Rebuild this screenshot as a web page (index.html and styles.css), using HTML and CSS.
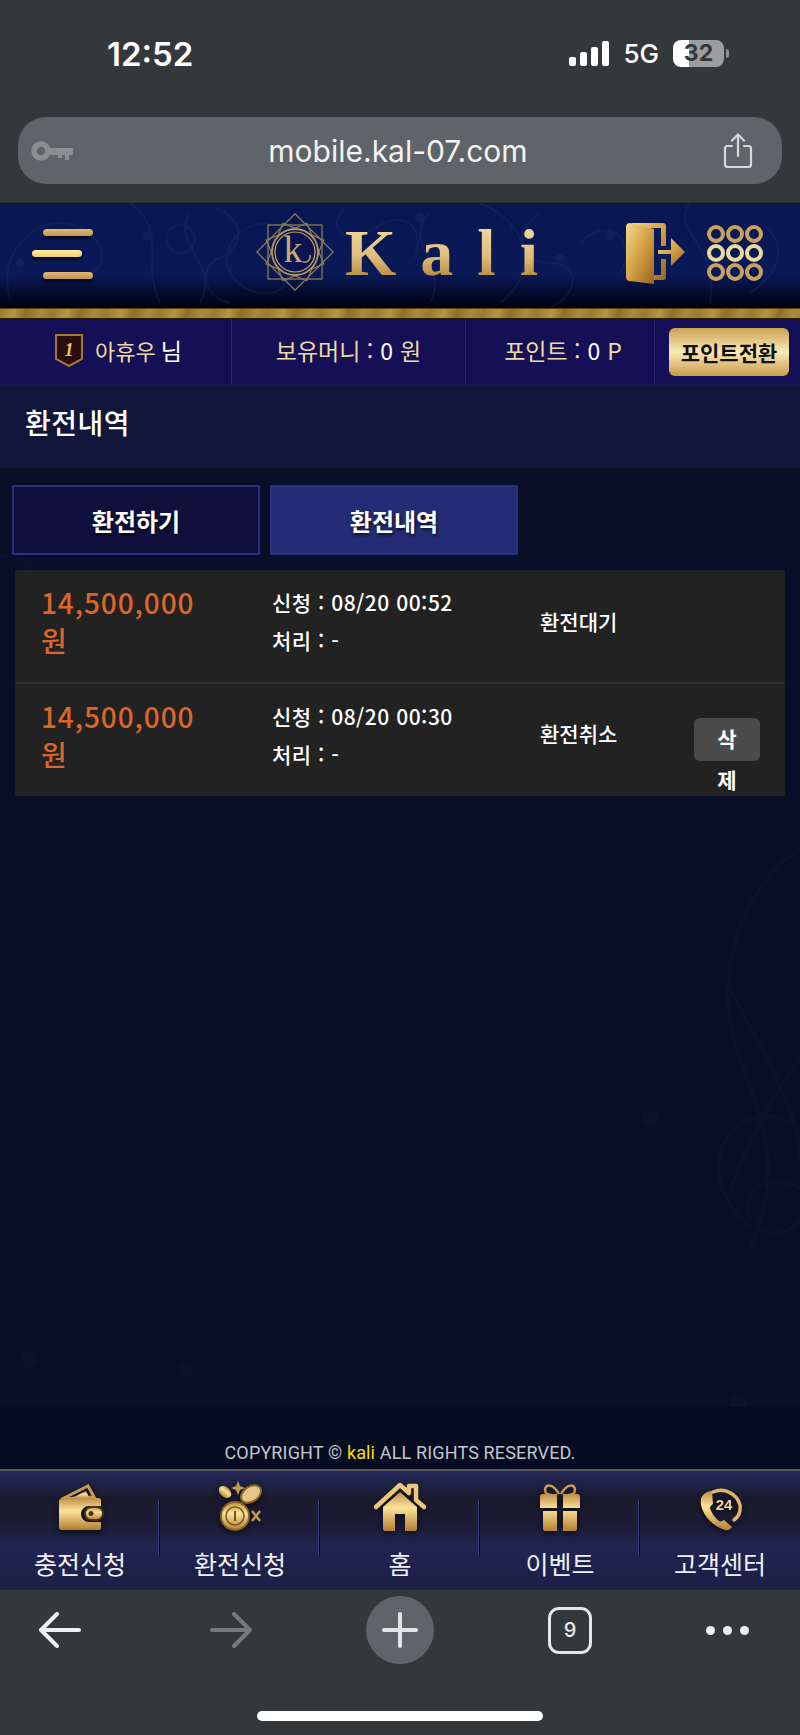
FILE: index.html
```html
<!DOCTYPE html>
<html lang="ko">
<head>
<meta charset="utf-8">
<title>환전내역</title>
<link rel="stylesheet" href="styles.css">
</head>
<body>
<svg class="defs" width="0" height="0" aria-hidden="true">
  <defs>
    <linearGradient id="doorgold" x1="0" y1="0" x2="1" y2="1">
      <stop offset="0" stop-color="#f6d98c"/>
      <stop offset=".55" stop-color="#cf9a3f"/>
      <stop offset="1" stop-color="#96651f"/>
    </linearGradient>
    <linearGradient id="navgold" x1="0" y1="0" x2="0" y2="1">
      <stop offset="0" stop-color="#c08f45"/>
      <stop offset=".4" stop-color="#fbe39a"/>
      <stop offset="1" stop-color="#b47f33"/>
    </linearGradient>
  </defs>
</svg>
<div class="phone">
  <div class="chrome-top">
    <div class="status">
      <span class="clock">12:52</span>
      <div class="status-right">
        <span class="signal"><i class="s1"></i><i class="s2"></i><i class="s3"></i><i class="s4"></i></span>
        <span class="net">5G</span>
        <span class="battery">32</span>
        <span class="battery-tip"></span>
      </div>
    </div>
    <div class="urlbar">
      <svg class="key" viewBox="0 0 42 20" width="42" height="20"><circle cx="10" cy="10" r="7" fill="none" stroke="#8b8f92" stroke-width="5.500"/><path d="M16 7h26v7h-4v5h-4v-5h-3v3h-4v-3H16z" fill="#8b8f92"/></svg>
      <span class="url">mobile.kal-07.com</span>
      <svg class="share" viewBox="0 0 30 36" width="30" height="36"><path d="M9 13H4.500A2.500 2.500 0 0 0 2 15.500v16A2.500 2.500 0 0 0 4.500 34h21a2.500 2.500 0 0 0 2.500-2.500v-16a2.500 2.500 0 0 0-2.500-2.500H21M15 23V2M9 7.500 15 1.500l6 6" fill="none" stroke="#d6d8d9" stroke-width="2.200" stroke-linecap="round" stroke-linejoin="round"/></svg>
    </div>
  </div>

  <header class="site-head">
    <svg class="swirl" viewBox="0 0 800 105" preserveAspectRatio="none" aria-hidden="true">
      <g fill="none" stroke="#2a3c86" stroke-width="2">
        <path d="M10 95C-5 50 40 5 80 25s20 60-20 50M130 0c40 30 10 60 30 100M190 10c-20 30 30 50 10 90M270 20c-50 0-60 60-10 70 30 5 40-30 10-35"/>
        <path d="M180 50a14 14 0 1 1 1 0M215 5c30 10 30 40 5 50s-15 40 10 45"/>
        <path d="M345 5c-20 20 0 40 30 20s50 0 40 30M430 10c-30 30 20 50 0 90M480 0c50 20 60 70 20 100M540 10c-30 20-20 50 10 50s30 30 0 45M580 40c30-30 60 0 40 30M690 0c-20 30 30 40 20 100M760 20c30 20 20 50-10 70"/>
      </g>
      <g fill="#2a3c86">
        <circle cx="148" cy="33" r="5"/><circle cx="420" cy="14" r="5"/><circle cx="610" cy="33" r="5"/><circle cx="560" cy="55" r="4"/><circle cx="20" cy="60" r="4"/>
      </g>
    </svg>
    <button class="burger" aria-label="menu"><i class="b1"></i><i class="b2"></i><i class="b3"></i></button>
    <div class="logo">
      <svg class="emblem" viewBox="0 0 78 78" width="78" height="78">
        <g fill="none" stroke="#8d7a55" stroke-width="1.300">
          <rect x="12" y="12" width="54" height="54"/>
          <rect x="12" y="12" width="54" height="54" transform="rotate(45 39 39)"/>
          <rect x="17" y="17" width="44" height="44" transform="rotate(22.500 39 39)"/>
          <rect x="17" y="17" width="44" height="44" transform="rotate(67.500 39 39)"/>
        </g>
        <circle cx="39" cy="39" r="23" fill="#0a154f"/>
        <circle cx="39" cy="39" r="23" fill="none" stroke="#b69660" stroke-width="1.800"/>
        <circle cx="39" cy="39" r="20" fill="none" stroke="#c9a86c" stroke-width="1.200"/>
        <text class="emblem-k" x="37" y="49" text-anchor="middle">k</text>
        <path d="M47 49c4 1 8-2 7-7" fill="none" stroke="#c9ac74" stroke-width="1.300"/>
      </svg>
      <span class="wordmark">Kali</span>
    </div>
    <div class="head-actions">
      <svg class="door" viewBox="0 0 60 62" width="60" height="62">
        <path d="M6 1h32a3 3 0 0 1 3 3v20h-5V6H14zM36 37h5v18a3 3 0 0 1-3 3h-9v-5h7z" fill="url(#doorgold)"/>
        <path d="M1 5a4 4 0 0 1 4-4l24 6v55L5 59a4 4 0 0 1-4-4z" fill="url(#doorgold)"/>
        <path d="M33 28h13V16l14 14-14 14V32H33z" fill="url(#doorgold)"/>
      </svg>
      <div class="rings"><i></i><i></i><i></i><i></i><i></i><i></i><i></i><i></i><i></i></div>
    </div>
  </header>
  <div class="gold-line"></div>

  <div class="infobar">
    <div class="cell cell-user">
      <svg class="medal" viewBox="0 0 28 33" width="28" height="33"><path d="M1 1h26v24L14 32 1 25z" fill="#2a0d0d" stroke="#a9762f" stroke-width="2"/><text class="medal-n" x="14" y="22" text-anchor="middle">1</text></svg>
      <span class="gold-txt nick">아휴우</span><span class="white-txt">님</span>
    </div>
    <div class="cell cell-money"><span class="gold-txt">보유머니 :</span><span class="white-txt">0</span><span class="gold-txt">원</span></div>
    <div class="cell cell-point"><span class="gold-txt">포인트 :</span><span class="white-txt">0</span><span class="gold-txt">P</span></div>
    <div class="cell cell-btn"><button class="convert">포인트전환</button></div>
  </div>

  <div class="page-title">환전내역</div>

  <main class="content">
    <svg class="bg-art" viewBox="0 0 800 1000" preserveAspectRatio="none" aria-hidden="true">
      <g fill="none" stroke="#0e1229" stroke-width="4">
        <path d="M800 380c-60 40-90 130-60 210s40 120 10 190M730 520c30 60 70 120 70 170M800 590c-30 40-50 80-70 130M800 660c-40-30-90 0-80 50s60 70 80 40M800 720c-40-20-60 10-50 30"/>
      </g>
      <g fill="#0c1229">
        <circle cx="30" cy="890" r="9"/><circle cx="650" cy="650" r="9"/><circle cx="185" cy="900" r="8"/><circle cx="738" cy="935" r="9"/><circle cx="775" cy="960" r="5"/>
      </g>
      <g fill="none" stroke="#0b1230" stroke-width="3">
        <path d="M30 20c-10 40 40 60 90 30M-5 90c30-10 50 20 40 60M130 20l15 25 15-25"/>
      </g>
    </svg>
    <div class="content-body">
      <div class="tabs">
        <button class="tab">환전하기</button>
        <button class="tab tab-on">환전내역</button>
      </div>
      <div class="history">
        <div class="row">
          <div class="amount">14,500,000 원</div>
          <div class="dates"><div>신청 : 08/20 00:52</div><div>처리 : -</div></div>
          <div class="state">환전대기</div>
          <div class="act"></div>
        </div>
        <div class="row">
          <div class="amount">14,500,000 원</div>
          <div class="dates"><div>신청 : 08/20 00:30</div><div>처리 : -</div></div>
          <div class="state">환전취소</div>
          <div class="act"><button class="del">삭제</button></div>
        </div>
      </div>
    </div>
    <div class="copyright">COPYRIGHT © <span class="brand">kali</span> ALL RIGHTS RESERVED.</div>
  </main>

  <nav class="bottom-nav">
    <a class="nav-item">
      <svg viewBox="0 0 48 48" width="48" height="48"><path d="M6 16 32 3l6 11z" fill="none" stroke="#c89a50" stroke-width="3"/><path d="M14 16 30 8l4 8z" fill="url(#navgold)"/><path d="M3 19a4 4 0 0 1 4-4h36a2 2 0 0 1 2 2v6H33a8 8 0 0 0 0 16h12v6a2 2 0 0 1-2 2H6a3 3 0 0 1-3-3z" fill="url(#navgold)"/><rect x="29" y="24" width="18" height="13" rx="6.500" fill="url(#navgold)" stroke="#4b3415" stroke-width="2"/><circle cx="35" cy="30.500" r="2.500" fill="#4b3415"/></svg>
      <span>충전신청</span>
    </a>
    <a class="nav-item">
      <svg viewBox="0 0 48 52" width="48" height="52"><ellipse cx="9" cy="13" rx="7" ry="5" transform="rotate(40 9 13)" fill="url(#navgold)"/><ellipse cx="35" cy="15" rx="11" ry="7.500" transform="rotate(-35 35 15)" fill="#e6c884" stroke="#8a6428" stroke-width="2"/><path d="M22 2l2 5 5 2-5 2-2 5-2-5-5-2 5-2z" fill="#c89a50"/><circle cx="19" cy="37" r="14" fill="url(#navgold)" stroke="#8a6428" stroke-width="2"/><circle cx="19" cy="37" r="9" fill="none" stroke="#7a5520" stroke-width="1.500"/><path d="M19 32v10" stroke="#7a5520" stroke-width="2"/><path d="M36 32l8 10M44 32l-8 10" stroke="#c89a50" stroke-width="2.500"/></svg>
      <span>환전신청</span>
    </a>
    <a class="nav-item">
      <svg viewBox="0 0 52 48" width="52" height="48"><path d="M9 24 26 9l17 15v22a2 2 0 0 1-2 2H31V31H21v17H11a2 2 0 0 1-2-2z" fill="url(#navgold)"/><path d="M2 24 26 2l9 8V3h7v14l8 7" fill="none" stroke="#edc677" stroke-width="4.500" stroke-linecap="round" stroke-linejoin="round"/></svg>
      <span>홈</span>
    </a>
    <a class="nav-item">
      <svg viewBox="0 0 44 48" width="44" height="48"><path d="M21 11C15 0 7 1 7 7c0 3 3 5 7 5M23 11C29 0 37 1 37 7c0 3-3 5-7 5" fill="none" stroke="#c89a50" stroke-width="2.500"/><path d="M2 14a3 3 0 0 1 3-3h14v14H2zM25 11h14a3 3 0 0 1 3 3v11H25zM5 28h14v20H7a2 2 0 0 1-2-2zM25 28h14v18a2 2 0 0 1-2 2H25z" fill="url(#navgold)"/></svg>
      <span>이벤트</span>
    </a>
    <a class="nav-item">
      <svg viewBox="0 0 46 46" width="46" height="46"><path d="M15 6c-4 0-10 3-11 8-2 10 8 26 24 31 3 1 6-1 7-3l-8-7c-2 1-3 2-5 1-4-3-8-9-9-13 0-2 2-3 3-4z" fill="url(#navgold)"/><path d="M16 7A20 20 0 0 1 43 20c1 7-2 12-6 15" fill="none" stroke="#e0b565" stroke-width="3.500" stroke-linecap="round"/><text class="call-n" x="27" y="25" text-anchor="middle">24</text></svg>
      <span>고객센터</span>
    </a>
  </nav>

  <div class="chrome-bottom">
    <div class="toolbar">
      <svg viewBox="0 0 44 36" width="44" height="36"><path d="M41 18H3M19 2 3 18l16 16" fill="none" stroke="#eeeff0" stroke-width="4" stroke-linecap="round" stroke-linejoin="round"/></svg>
      <svg viewBox="0 0 44 36" width="44" height="36"><path d="M3 18h38M25 2l16 16-16 16" fill="none" stroke="#77797b" stroke-width="4" stroke-linecap="round" stroke-linejoin="round"/></svg>
      <span class="newtab"><svg viewBox="0 0 36 36" width="36" height="36"><path d="M18 2v32M2 18h32" stroke="#e4e5e6" stroke-width="4" stroke-linecap="round"/></svg></span>
      <span class="tabcount">9</span>
      <span class="dots"><i></i><i></i><i></i></span>
    </div>
    <div class="home-indicator"></div>
  </div>
</div>
</body>
</html>
```

FILE: styles.css
```css
* { box-sizing: border-box; }
html, body { margin: 0; padding: 0; }
body { background: #080f26; font-family: "Noto Sans CJK KR", "Noto Sans", sans-serif; color: #fff; }
button { font-family: inherit; border: 0; margin: 0; padding: 0; }
.defs { display: block; }

.phone { width: 800px; height: 1735px; display: flex; flex-direction: column; overflow: hidden; }

/* browser chrome, top */
.chrome-top { height: 203px; background: #35383b; padding: 0 18px; flex: none; border-bottom: 1px solid #2b2d30; }
.status { height: 117px; display: flex; justify-content: space-between; align-items: flex-start; }
.clock { font-family: Inter, sans-serif; font-weight: 600; font-size: 33px; line-height: 38px; margin: 35px 0 0 89px; }
.status-right { display: flex; align-items: center; margin: 40px 53px 0 0; height: 27px; }
.signal { display: flex; align-items: flex-end; gap: 4px; height: 25px; }
.signal i { display: block; width: 7px; background: #fff; border-radius: 2px; }
.s1 { height: 9px; } .s2 { height: 14px; } .s3 { height: 19px; } .s4 { height: 25px; }
.net { font-family: Inter, sans-serif; font-size: 26px; margin: 0 14px; font-weight: 500; line-height: 27px; }
.battery { display: block; width: 51px; height: 27px; border-radius: 8px; background: linear-gradient(90deg, #fff 0 32%, #9b9d9f 32%); color: #33363a; font-family: Inter, sans-serif; font-weight: 700; font-size: 23px; line-height: 27px; text-align: center; }
.battery-tip { display: block; width: 3px; height: 9px; background: #8d8f91; border-radius: 0 3px 3px 0; margin-left: 2px; }
.urlbar { height: 67px; border-radius: 28px; background: #5f6468; display: flex; align-items: center; justify-content: space-between; padding: 0 29px 0 13px; }
.url { font-family: Inter, sans-serif; font-size: 30px; color: #f2f3f3; }
.key, .share { display: block; flex: none; }

/* site header */
.site-head { height: 105px; flex: none; position: relative; display: flex; align-items: center; padding-bottom: 6px; background: linear-gradient(180deg, #081750 0, #0a1a58 68%, #040c33 84%, #00020f 100%); }
.swirl { position: absolute; left: 0; top: 0; width: 100%; height: 100%; opacity: .22; }
.burger { position: relative; width: 60px; height: 50px; margin: 2px 0 0 32px; background: none; display: flex; flex-direction: column; justify-content: space-between; align-items: flex-start; flex: none; }
.burger i { display: block; height: 7px; width: 50px; border-radius: 4px; background: linear-gradient(180deg, #e2b772, #c3955a); box-shadow: 0 3px 3px rgba(0,0,0,.5); }
.b1, .b3 { margin-left: 11px; }
.burger .b2 { background: linear-gradient(180deg, #fff2a8, #f3cc68); }
.logo { position: relative; display: flex; align-items: center; margin-left: 164px; flex: none; }
.emblem { display: block; margin-top: -2px; }
.emblem-k { font-family: "Liberation Serif", serif; font-size: 38px; fill: #c9ac74; }
.wordmark { font-family: "Liberation Serif", serif; font-weight: 700; font-size: 66px; line-height: 70px; letter-spacing: 24px; margin-left: 11px; background: linear-gradient(180deg, #f0d89a 15%, #dfbd7c 55%, #b98a40 85%); -webkit-background-clip: text; background-clip: text; color: transparent; }
.head-actions { position: relative; display: flex; align-items: center; margin-left: auto; margin-right: 37px; gap: 22px; }
.door { display: block; }
.rings { display: grid; grid-template-columns: repeat(3, 18px); grid-auto-rows: 18px; gap: 1px; }
.rings i { display: block; border: 4px solid #c9a25f; border-radius: 50%; }
.rings i:nth-child(n+4):nth-child(-n+6) { border-color: #ecd99c; }
.gold-line { height: 11px; flex: none; border-top: 1px solid #5a4415; border-bottom: 1px solid #241a0a; background: repeating-linear-gradient(105deg, #9b7a2d 0, #b8953f 14px, #8f6e27 26px, #ab8a3a 40px, #9b7a2d 52px); }

/* info bar */
.infobar { height: 67px; flex: none; display: grid; grid-template-columns: 232px 234px 189px 145px; background: #151056; border-bottom: 2px solid #1a1550; font-size: 23px; line-height: 34px; }
.cell { display: flex; align-items: center; justify-content: center; gap: 7px; border-right: 1px solid #2a2670; padding-bottom: 3px; }
.cell-user { padding-left: 6px; gap: 5px; }
.cell-point { padding-left: 6px; }
.cell-btn { border-right: 0; justify-content: flex-end; padding: 0 11px 0 0; }
.gold-txt { color: #eedaa2; }
.white-txt { color: #fff; }
.nick { font-size: 22px; }
.medal { display: block; margin-right: 7px; }
.medal-n { font-family: "Liberation Serif", serif; font-weight: 700; font-style: italic; font-size: 18px; fill: #f3c850; }
.convert { width: 120px; height: 48px; border-radius: 6px; background: linear-gradient(180deg, #caa255 0, #f9eab4 50%, #c79b4c 100%); color: #111; font-size: 21px; font-weight: 700; line-height: 46px; }

/* title */
.page-title { height: 82px; flex: none; background: #12163a; font-size: 28px; letter-spacing: .5px; line-height: 72px; padding-left: 25px; font-weight: 500; }

/* content */
.content { flex: 1; display: flex; flex-direction: column; min-height: 0; position: relative; isolation: isolate; background: #080f26; }
.bg-art { position: absolute; left: 0; top: 0; width: 100%; height: 100%; z-index: -1; }
.content-body { flex: 1; min-height: 0; padding: 17px 15px 0 12px; }
.tabs { display: flex; gap: 10px; }
.tab { width: 248px; height: 70px; border: 2px solid #2a2f85; background: #10103d; color: #fff; font-size: 24px; font-weight: 700; text-shadow: 1px 2px 3px rgba(0,0,0,.7); }
.tab-on { background: #232c74; }
.history { margin: 15px 0 0 3px; background: #222; }
.row { display: grid; grid-template-columns: 231px 268px 154px 1fr; height: 112px; padding: 13px 0 0 26px; }
.row + .row { border-top: 2px solid #2b2b2b; height: 114px; }
.amount { font-size: 28px; letter-spacing: .9px; line-height: 38px; color: #dc652a; font-weight: 500; width: 170px; }
.dates { font-size: 21px; letter-spacing: .5px; line-height: 38px; font-weight: 500; }
.state { font-size: 21px; line-height: 38px; font-weight: 500; margin-top: 19px; }
.row + .row .state { margin-top: 17px; }
.act { margin-top: 21px; }
.del { display: block; width: 66px; height: 43px; border-radius: 6px; background: #4b4b4b; color: #fff; font-size: 21px; font-weight: 700; line-height: 41px; word-break: break-all; padding: 0 20px 2px; display: block; }
.copyright { height: 62px; flex: none; padding-top: 32px; background: #050b20; text-align: center; font-family: Roboto, sans-serif; font-size: 18px; letter-spacing: .15px; line-height: 28px; color: #c4c6cc; }
.brand { color: #ffdc00; }

/* bottom nav */
.bottom-nav { height: 121px; flex: none; display: grid; grid-template-columns: repeat(5, 160px); border-top: 2px solid #55585f; background: linear-gradient(180deg, #242858 0, #1a1a2c 24%, #1b1c35 45%, #20244f 62%, #1c2048 100%); }
.nav-item { display: flex; flex-direction: column; align-items: center; justify-content: flex-end; padding-bottom: 10px; position: relative; font-size: 25px; line-height: 34px; color: #eef0f4; gap: 15px; }
.nav-item svg { display: block; filter: drop-shadow(0 3px 3px rgba(0,0,0,.5)); }
.nav-item + .nav-item::before { content: ""; position: absolute; left: -2px; top: 28px; height: 57px; width: 3px; background: linear-gradient(90deg, #3b4488 0 1px, #050516 1px 2px, transparent 2px); }
.call-n { font-family: "Liberation Sans", sans-serif; font-weight: 700; font-size: 15px; fill: #ecd69a; }

/* browser chrome, bottom */
.chrome-bottom { height: 145px; flex: none; background: #35383b; display: flex; flex-direction: column; align-items: center; }
.toolbar { width: 100%; display: grid; grid-template-columns: 171px 157px 182px 158px auto; height: 80px; padding-left: 38px; align-items: center; justify-items: start; }
.toolbar svg { display: block; }
.newtab { width: 68px; height: 68px; border-radius: 50%; background: #5f6468; display: flex; align-items: center; justify-content: center; }
.tabcount { width: 44px; height: 47px; border: 3px solid #e6e7e8; border-radius: 11px; display: block; text-align: center; font-family: Inter, sans-serif; font-size: 20px; font-weight: 500; line-height: 41px; color: #e6e7e8; }
.dots { display: flex; gap: 8px; }
.dots i { display: block; width: 9px; height: 9px; border-radius: 50%; background: #eeeff0; }
.home-indicator { width: 286px; height: 10px; border-radius: 5px; background: #fff; margin-top: 41px; }
```
